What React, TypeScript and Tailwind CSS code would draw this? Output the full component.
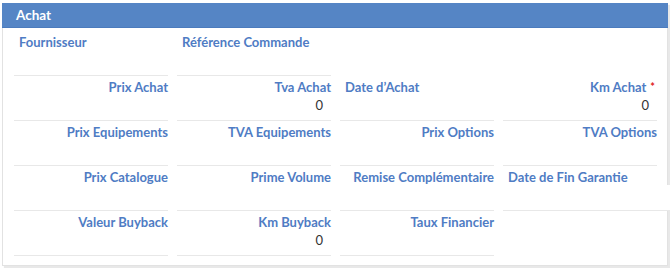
type Cell = {
  label?: string;
  value?: string;
  align?: 'left' | 'right';
  required?: boolean;
  empty?: boolean;
  overflow?: boolean;
};

const rows: Cell[][] = [
  [
    { label: 'Fournisseur', align: 'left' },
    { label: 'Référence Commande', align: 'left' },
    { empty: true },
    { empty: true },
  ],
  [
    { label: 'Prix Achat' },
    { label: 'Tva Achat', value: '0' },
    { label: 'Date d’Achat', align: 'left' },
    { label: 'Km Achat', value: '0', required: true },
  ],
  [
    { label: 'Prix Equipements' },
    { label: 'TVA Equipements' },
    { label: 'Prix Options' },
    { label: 'TVA Options' },
  ],
  [
    { label: 'Prix Catalogue' },
    { label: 'Prime Volume' },
    { label: 'Remise Complémentaire' },
    { label: 'Date de Fin Garantie', align: 'left', overflow: true },
  ],
  [
    { label: 'Valeur Buyback' },
    { label: 'Km Buyback', value: '0' },
    { label: 'Taux Financier' },
    { empty: true },
  ],
];

function Field({ cell }: { cell: Cell }) {
  if (cell.empty) return <div className="h-[45px]" />;
  const left = cell.align === 'left';
  if (cell.overflow) {
    return (
      <div className="h-[45px] pt-[3px] flex flex-col">
        <div className="h-4 leading-4 text-[13px] font-bold text-[#4f7cc4] pl-[5px] whitespace-nowrap">{cell.label}</div>
        <div className="relative flex-1 -mr-[14px] bg-white border-b border-[#e8e8e8]" />
      </div>
    );
  }
  return (
    <div className="h-[45px] pt-[3px] border-b border-[#e8e8e8]">
      <div
        className={`h-4 leading-4 text-[13px] font-bold text-[#4f7cc4] whitespace-nowrap ${left ? 'text-left pl-[5px]' : 'text-right'}`}
      >
        {cell.label}
        {cell.required && <span className="text-[#e02020] text-[11px] align-top ml-[4px] mr-[2px]">*</span>}
      </div>
      <div className="h-5 leading-5 text-[13px] text-[#333] text-right pr-2">{cell.value}</div>
    </div>
  );
}

export default function App() {
  return (
    <div className="w-[670px] h-[268px] bg-white pl-[2px] pt-[3px] font-['Lato',sans-serif]">
      <div className="w-[666px] h-[263px] border border-[#e2e2e2] bg-white shadow-[2px_2px_1px_rgba(0,0,0,0.09)]">
        <div className="h-[25px] -mt-px -mx-px bg-[#5585c5] border-b border-[#4b7bbd] pl-[14px] flex items-center">
          <span className="text-white text-[13.5px] font-bold">Achat</span>
        </div>
        <div className="pl-[11px] pr-[10px] pt-[3px] flex flex-col">
          {rows.map((row, i) => (
            <div key={i} className="grid grid-cols-4 gap-x-[9px]">
              {row.map((cell, j) => (
                <Field key={j} cell={cell} />
              ))}
            </div>
          ))}
        </div>
      </div>
    </div>
  );
}
